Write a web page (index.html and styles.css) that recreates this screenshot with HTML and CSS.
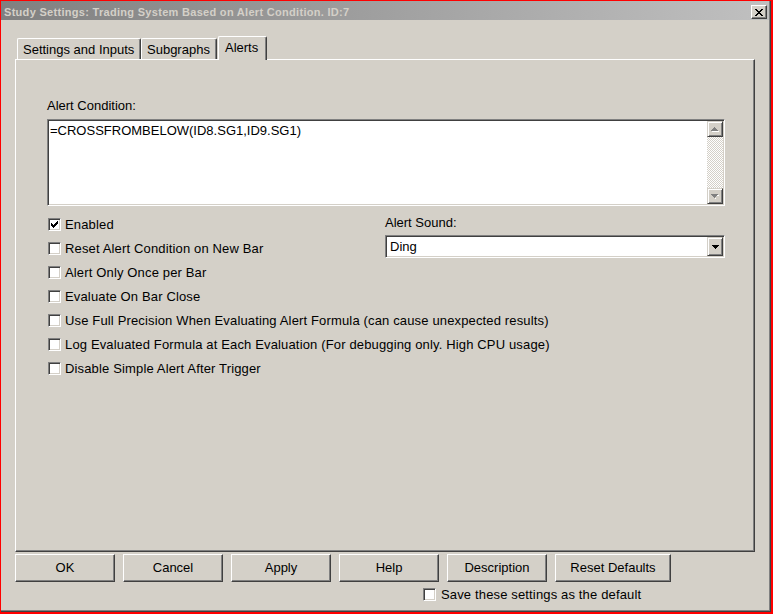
FILE: index.html
```html
<!doctype html>
<html lang="en">
  <head>
    <title>Study Settings</title>
    <link rel="stylesheet" href="styles.css">
  </head>
  <body>
    <div class="window">
      <div class="frame">
        <div class="title-bar">
          <div class="title">Study Settings: Trading System Based on Alert Condition. ID:7</div>
          <button class="close-btn">
            <svg width="8" height="7" viewBox="0 0 8 7" shape-rendering="crispEdges">
              <path d="M0 0h2v1H0z M6 0h2v1H6z M1 1h2v1H1z M5 1h2v1H5z M2 2h4v1H2z M3 3h2v1H3z M2 4h4v1H2z M1 5h2v1H1z M5 5h2v1H5z M0 6h2v1H0z M6 6h2v1H6z" fill="#000"/>
            </svg>
          </button>
        </div>

        <div class="dialog">
          <div class="tabs">
            <div class="tab tab-inputs">Settings and Inputs</div>
            <div class="tab tab-subgraphs">Subgraphs</div>
            <div class="tab active">Alerts</div>
          </div>

          <div class="panel">
            <div class="field-label">Alert Condition:</div>
            <div class="edit">
              <div class="edit-text">=CROSSFROMBELOW(ID8.SG1,ID9.SG1)</div>
              <div class="scrollbar">
                <div class="scroll-btn">
                  <svg width="8" height="5" viewBox="0 0 8 5" shape-rendering="crispEdges">
                    <path d="M1 4h7v1H1z" fill="#fff"/>
                    <path d="M3 0h1v1H3z M2 1h3v1H2z M1 2h5v1H1z M0 3h7v1H0z" fill="#808080"/>
                  </svg>
                </div>
                <div class="scroll-track"></div>
                <div class="scroll-btn">
                  <svg width="8" height="5" viewBox="0 0 8 5" shape-rendering="crispEdges">
                    <path d="M1 1h7v1H1z M4 4h1v1H4z" fill="#fff"/>
                    <path d="M0 0h7v1H0z M1 1h5v1H1z M2 2h3v1H2z M3 3h1v1H3z" fill="#808080"/>
                  </svg>
                </div>
              </div>
            </div>

            <div class="options">
              <div class="checks">
                <label class="check">
                  <span class="box">
                    <svg width="7" height="7" viewBox="0 0 7 7" shape-rendering="crispEdges">
                      <path d="M6 0h1v1H6z M5 1h2v1H5z M0 2h1v1H0z M4 2h3v1H4z M0 3h2v1H0z M3 3h3v1H3z M0 4h5v1H0z M1 5h3v1H1z M2 6h1v1H2z" fill="#000"/>
                    </svg>
                  </span>Enabled
                </label>
                <label class="check"><span class="box"></span>Reset Alert Condition on New Bar</label>
                <label class="check"><span class="box"></span>Alert Only Once per Bar</label>
                <label class="check"><span class="box"></span>Evaluate On Bar Close</label>
                <label class="check"><span class="box"></span>Use Full Precision When Evaluating Alert Formula (can cause unexpected results)</label>
                <label class="check"><span class="box"></span>Log Evaluated Formula at Each Evaluation (For debugging only. High CPU usage)</label>
                <label class="check"><span class="box"></span>Disable Simple Alert After Trigger</label>
              </div>

              <div class="sound">
                <div class="sound-label">Alert Sound:</div>
                <div class="combo">
                  <span class="combo-text">Ding</span>
                  <span class="combo-btn">
                    <svg width="7" height="4" viewBox="0 0 7 4" shape-rendering="crispEdges">
                      <path d="M0 0h7v1H0z M1 1h5v1H1z M2 2h3v1H2z M3 3h1v1H3z" fill="#000"/>
                    </svg>
                  </span>
                </div>
              </div>
            </div>
          </div>

          <div class="buttons">
            <button class="btn">OK</button>
            <button class="btn">Cancel</button>
            <button class="btn">Apply</button>
            <button class="btn">Help</button>
            <button class="btn">Description</button>
            <button class="btn btn-wide">Reset Defaults</button>
          </div>

          <label class="check save-default"><span class="box"></span>Save these settings as the default</label>
        </div>
      </div>
    </div>
  </body>
</html>
```

FILE: styles.css
```css
* {
  box-sizing: border-box;
}

body,
html {
  margin: 0;
  background-color: #d4d0c8;
  color: #000;
  font-family: "Liberation Sans", Arial, sans-serif;
  font-size: 13px;
  line-height: 15px;
}

svg {
  display: block;
}

.window {
  width: 773px;
  height: 614px;
  border: solid #f00;
  border-width: 1px 2px 2px 1px;
  display: flex;
}

.frame {
  flex-grow: 1;
  display: flex;
  flex-direction: column;
  background-color: #d4d0c8;
  border-right: 1px solid #404040;
  border-bottom: 1px solid #404040;
  box-shadow: inset -1px -1px #808080;
  padding: 0 1px 1px 0;
}

/* title bar */
.title-bar {
  display: flex;
  justify-content: space-between;
  align-items: flex-start;
  height: 19px;
  padding: 0 2px 0 3px;
  background: linear-gradient(to right, #808080, #c0c0c0);
}

.title {
  padding-top: 5px;
  font-weight: bold;
  font-size: 11px;
  line-height: 12px;
  letter-spacing: 0.3px;
  color: #d4d0c8;
}

.close-btn {
  width: 16px;
  height: 14px;
  margin-top: 4px;
  padding: 0;
  display: flex;
  align-items: center;
  justify-content: center;
  background-color: #d4d0c8;
  border: 1px solid;
  border-color: #fff #404040 #404040 #fff;
  box-shadow: inset -1px -1px #808080;
}

/* dialog body */
.dialog {
  padding: 0 14px;
}

.tabs {
  display: flex;
  align-items: flex-end;
  height: 23px;
  margin-top: 16px;
  padding-left: 2px;
}

.tab {
  height: 21px;
  padding: 3px 5px 0 5px;
  border-top: 1px solid #fff;
  border-left: 1px solid #fff;
  border-right: 1px solid #404040;
  border-radius: 2px 2px 0 0;
  box-shadow: inset -1px 0 #808080;
  white-space: nowrap;
}

.tab-inputs {
  width: 124px;
}

.tab-subgraphs {
  width: 76px;
}

.tab.active {
  position: relative;
  z-index: 1;
  height: 24px;
  margin-left: 1px;
  margin-bottom: -1px;
  padding: 3px 8px 0 6px;
  background-color: #d4d0c8;
}

.panel {
  height: 493px;
  padding: 38px 0 0 31px;
  border-top: 1px solid #fff;
  border-left: 1px solid #fff;
  border-right: 1px solid #404040;
  border-bottom: 1px solid #404040;
  box-shadow: inset -1px -1px #808080;
}

.field-label {
  height: 15px;
}

/* sunken controls */
.edit,
.combo,
.box {
  background-color: #fff;
  border: 1px solid;
  border-color: #808080 #fff #fff #808080;
  box-shadow: inset 1px 1px #404040, inset -1px -1px #d4d0c8;
}

.edit {
  display: flex;
  width: 678px;
  height: 87px;
  margin-top: 6px;
  padding: 1px;
}

.edit-text {
  flex-grow: 1;
  padding: 2px 0 0 1px;
}

.scrollbar {
  width: 16px;
  display: flex;
  flex-direction: column;
}

.scroll-btn,
.combo-btn {
  display: flex;
  align-items: center;
  justify-content: center;
  background-color: #d4d0c8;
  border: 1px solid;
  border-color: #d4d0c8 #404040 #404040 #d4d0c8;
  box-shadow: inset 1px 1px #fff, inset -1px -1px #808080;
}

.scroll-btn {
  height: 16px;
}

.scroll-track {
  flex-grow: 1;
  background: repeating-conic-gradient(#fff 0 25%, #d4d0c8 0 50%) 0 0 / 2px 2px;
}

/* options */
.options {
  display: grid;
  grid-template-columns: 338px 340px;
  margin-top: 6px;
}

.check {
  display: flex;
  align-items: center;
  gap: 4px;
  height: 24px;
  padding-left: 1px;
  white-space: nowrap;
  letter-spacing: 0.15px;
}

.box {
  width: 13px;
  height: 13px;
  flex-shrink: 0;
  display: flex;
  align-items: center;
  justify-content: center;
}

.sound-label {
  height: 23px;
  padding-top: 3px;
}

.combo {
  display: flex;
  height: 23px;
  padding: 1px;
}

.combo-text {
  flex-grow: 1;
  padding: 2px 0 0 3px;
}

.combo-btn {
  width: 16px;
  height: 19px;
}

/* bottom buttons */
.buttons {
  display: flex;
  gap: 8px;
  margin-top: 2px;
}

.btn {
  width: 100px;
  height: 28px;
  padding: 0 0 1px;
  font-family: inherit;
  font-size: 13px;
  color: #000;
  background-color: #d4d0c8;
  border: 1px solid;
  border-color: #fff #404040 #404040 #fff;
  box-shadow: inset -1px -1px #808080;
}

.btn-wide {
  width: 116px;
}

.save-default {
  height: 13px;
  margin-top: 6px;
  padding-left: 408px;
  gap: 5px;
}
```
